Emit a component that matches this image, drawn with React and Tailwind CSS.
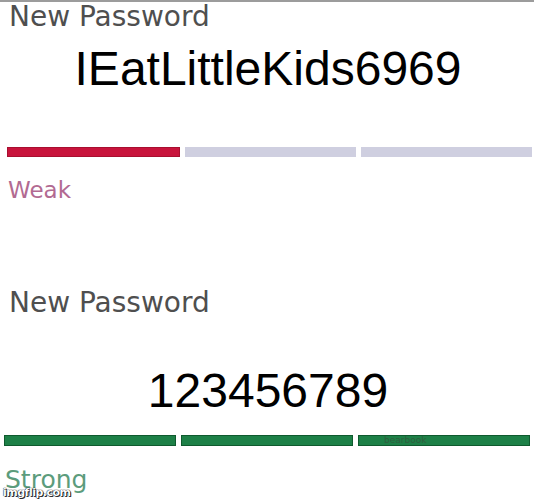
export default function App() {
  const label = "font-['DejaVu_Sans',sans-serif] text-[28px] leading-none text-[#4f4f4f] pl-[9px]";
  const pw = "font-['Liberation_Sans',Arial,sans-serif] text-[48px] leading-none text-black text-center";

  return (
    <div className="relative w-[534px] h-[500px] overflow-hidden bg-white border-t-2 border-[#9c9c9c] flex flex-col">
      {/* weak password */}
      <div className={`${label} mt-[1px]`}>New Password</div>
      <div className={`${pw} mt-[14px] pl-[2px]`}>IEatLittleKids6969</div>
      <div className="flex gap-[5px] pl-[7px] pr-[2px] mt-[54px] h-[10px]">
        <div className="flex-1 bg-[#c8143c] border border-[#a80f30]" />
        <div className="flex-1 bg-[#cfcfe0]" />
        <div className="flex-1 bg-[#cfcfe0]" />
      </div>
      <div className="font-['DejaVu_Sans',sans-serif] text-[23px] leading-none text-[#b26a92] pl-[8px] mt-[22px]">
        Weak
      </div>

      {/* strong password */}
      <div className={`${label} mt-[87px]`}>New Password</div>
      <div className={`${pw} mt-[50px] pl-[2px]`}>123456789</div>
      <div className="flex gap-[5px] px-[4px] mt-[20px] h-[11px]">
        <div className="flex-1 bg-[#1d8047] border border-[#0f5a2e]" />
        <div className="flex-1 bg-[#1d8047] border border-[#0f5a2e]" />
        <div className="flex-1 bg-[#1d8047] border border-[#0f5a2e] flex items-center">
          <span className="ml-[25px] font-['DejaVu_Sans',sans-serif] text-[9px] leading-none text-[#2e5e3e]">bearbook</span>
        </div>
      </div>
      <div className="font-['DejaVu_Sans',sans-serif] text-[25px] leading-none text-[#5c9c7c] pl-[5px] mt-[21px]">
        Strong
      </div>

      <span className="absolute left-[3px] bottom-[2px] font-['DejaVu_Sans',sans-serif] font-bold text-[11px] leading-none tracking-[-0.5px] text-white [text-shadow:0_0_1px_#000,0_0_1px_#000,1px_1px_0_#333]">
        imgflip.com
      </span>
    </div>
  );
}
